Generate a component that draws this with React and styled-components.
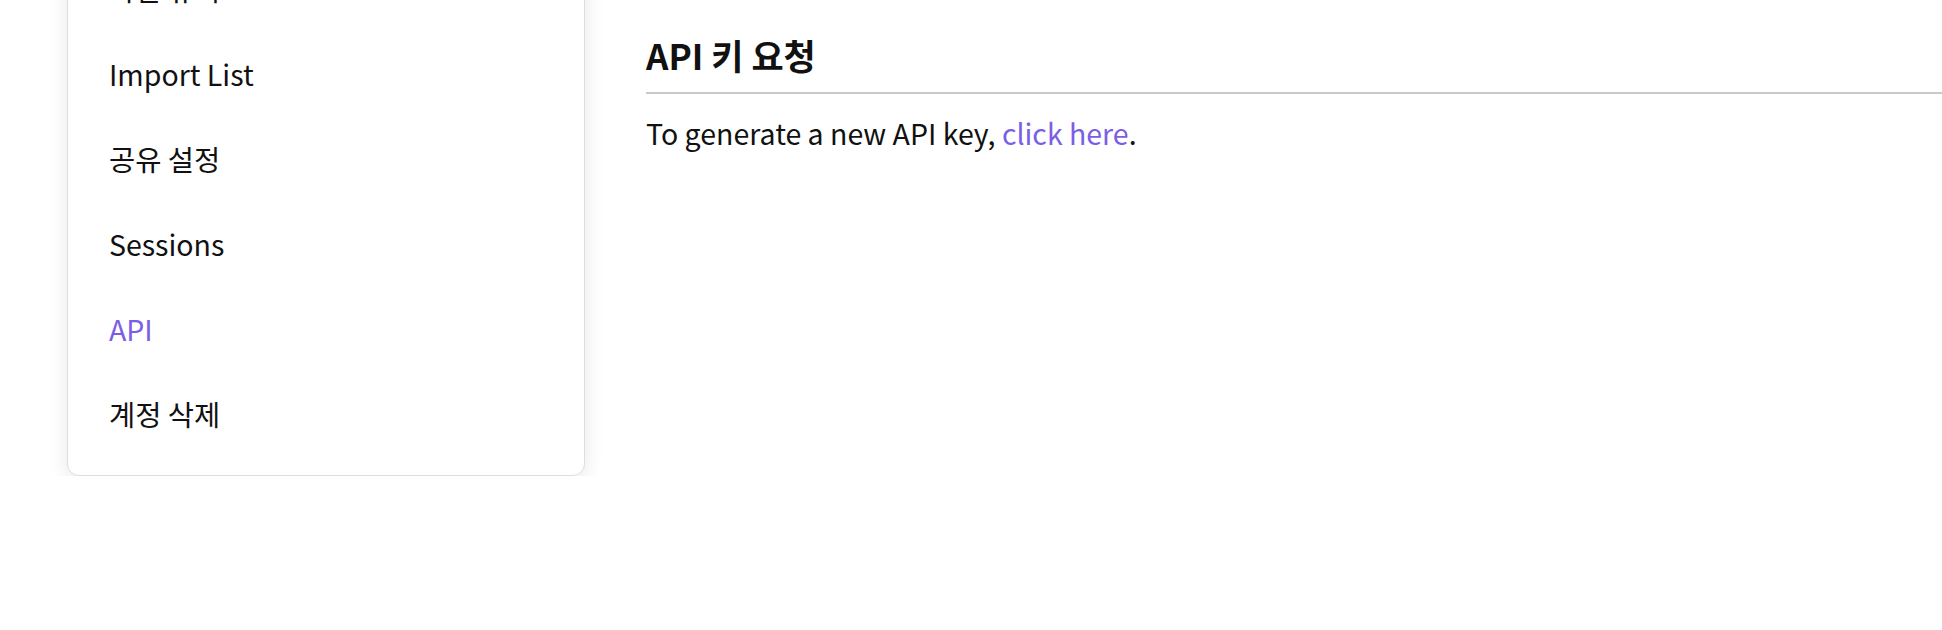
import React from "react";
import styled, { createGlobalStyle } from "styled-components";

const GlobalStyle = createGlobalStyle`
  html, body {
    margin: 0;
    padding: 0;
    background: #ffffff;
    overflow: hidden;
  }
  body {
    font-family: "Noto Sans CJK KR", "Noto Sans", sans-serif;
    color: #111111;
  }
`;

const Page = styled.div`
  display: flex;
  align-items: flex-start;
  margin-top: -120px;
  padding-left: 67px;
`;

const SideCard = styled.nav`
  flex: 0 0 518px;
  box-sizing: border-box;
  margin-top: 52px;
  padding: 13px 0 19px;
  background: #ffffff;
  border: 1px solid #dedede;
  border-radius: 12px;
  box-shadow: 0 5px 20px rgba(0, 0, 0, 0.09);
`;

const NavItem = styled.a`
  display: flex;
  align-items: center;
  height: 85px;
  padding-left: 41px;
  font-size: 28.5px;
  color: ${(p) => (p.$active ? "#7b5ee6" : "#111111")};
  text-decoration: none;
  cursor: pointer;
`;

const Main = styled.main`
  flex: 1;
  display: flex;
  flex-direction: column;
  padding-top: 155px;
  padding-left: 61px;
`;

const Heading = styled.h2`
  margin: 0;
  padding-bottom: 17px;
  font-size: 35px;
  line-height: 40px;
  font-weight: 700;
  color: #111111;
  border-bottom: 2px solid #c9c9c9;
`;

const Paragraph = styled.p`
  margin: 19px 0 0;
  font-size: 28.5px;
  line-height: 40px;
  color: #111111;
`;

const Link = styled.a`
  color: #7b5ee6;
  text-decoration: none;
  cursor: pointer;
`;

const items = ["차단 유저", "Import List", "공유 설정", "Sessions", "API", "계정 삭제"];

export default function App() {
  return (
    <>
      <GlobalStyle />
      <Page>
        <SideCard>
          {items.map((label) => (
            <NavItem key={label} $active={label === "API"}>
              {label}
            </NavItem>
          ))}
        </SideCard>
        <Main>
          <Heading>API 키 요청</Heading>
          <Paragraph>
            To generate a new API key, <Link>click here</Link>.
          </Paragraph>
        </Main>
      </Page>
    </>
  );
}
